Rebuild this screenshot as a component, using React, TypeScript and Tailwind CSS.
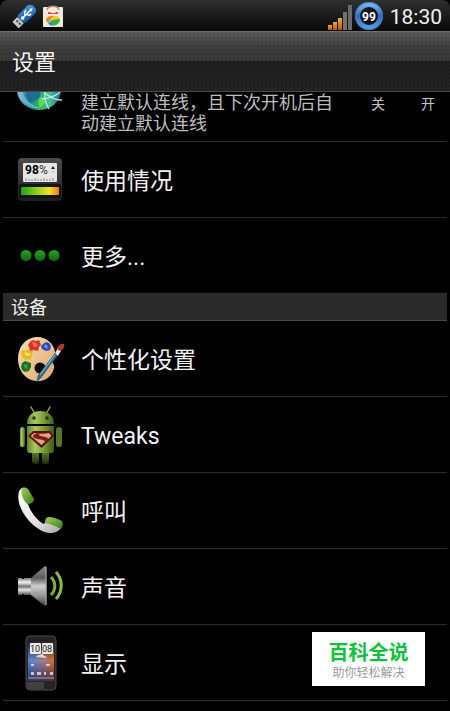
import { ReactNode, useState } from 'react';

function UsbIcon() {
  return (
    <svg width="26" height="24" viewBox="0 0 26 24" aria-hidden="true">
      <defs>
        <linearGradient id="usb" x1="0" y1="0" x2="1" y2="1">
          <stop offset="0" stopColor="#4aa0e6" />
          <stop offset="1" stopColor="#0b4c9c" />
        </linearGradient>
      </defs>
      <g transform="rotate(45 13 12)">
        <rect x="8" y="-3" width="11" height="19" rx="3" fill="url(#usb)" />
        <rect x="9" y="16" width="9" height="7" fill="#c9c9c9" />
        <path d="M11 18h2v2h-2zM14.500 18h2v2h-2z" fill="#444" />
        <path d="M13.500 1v12M13.500 10l-3-3V5M13.500 8l3-2V4" stroke="#fff" strokeWidth="1.400" fill="none" />
        <circle cx="13.500" cy="13" r="1.800" fill="#fff" />
        <path d="M11.500 2l2-3 2 3z" fill="#fff" />
      </g>
    </svg>
  );
}

function AppBoxIcon() {
  return (
    <svg width="22" height="23" viewBox="0 0 22 23" aria-hidden="true">
      <rect x="1" y="2" width="20" height="20" rx="1" fill="#efebe2" />
      <path d="M5 5C6 0 16 0 17 5" fill="none" stroke="#b98d58" strokeWidth="1.500" />
      <path d="M6 7h2l1 1h4l1-1h2v2H6z" fill="#e0483a" />
      <path d="M4 15c0-3 4-5 8-4l-6 7c-1-1-2-2-2-3z" fill="#f08a1c" />
      <path d="M11 11c4-1 7 1 7 4l-8 1z" fill="#f3c81f" />
      <path d="M18 14c0 5-5 8-11 6l3-5z" fill="#43ad32" />
      <path d="M6 18l4-3 1 5c-2 .5-4 0-5-2z" fill="#2793cf" />
    </svg>
  );
}

function SignalIcon() {
  return (
    <svg width="25" height="26" viewBox="0 0 25 26" aria-hidden="true">
      <defs>
        <linearGradient id="signal" x1="0" y1="0" x2="0" y2="1">
          <stop offset="0" stopColor="#f0ac35" />
          <stop offset="1" stopColor="#b8560c" />
        </linearGradient>
      </defs>
      <rect x="0" y="21" width="4" height="5" fill="url(#signal)" />
      <rect x="5" y="18" width="4" height="8" fill="url(#signal)" />
      <rect x="10" y="14" width="4" height="12" fill="url(#signal)" />
      <rect x="15" y="8" width="4" height="18" fill="#77706b" />
      <rect x="20" y="1" width="4" height="25" fill="#6b6b6b" />
    </svg>
  );
}

function BatteryIcon() {
  return (
    <svg width="30" height="30" viewBox="0 0 30 30" role="img" aria-label="99%">
      <defs>
        <linearGradient id="ring" x1="0" y1="0" x2="0" y2="1">
          <stop offset="0" stopColor="#7db2ea" />
          <stop offset="0.5" stopColor="#2d6cbc" />
          <stop offset="1" stopColor="#5a9ae2" />
        </linearGradient>
      </defs>
      <circle cx="15" cy="14" r="11.500" fill="#10151c" stroke="url(#ring)" strokeWidth="5" />
      <circle cx="15" cy="14" r="13.500" fill="none" stroke="#3b7fcc" strokeWidth="1" />
      <text
        x="15"
        y="19"
        textAnchor="middle"
        className="fill-white font-['Roboto',sans-serif] text-[12px] font-bold"
      >
        99
      </text>
    </svg>
  );
}

// only the lower part of the globe is scrolled into view
function GlobeIcon() {
  return (
    <svg width="48" height="20" viewBox="0 0 48 20" aria-hidden="true">
      <defs>
        <linearGradient id="globe">
          <stop offset="0" stopColor="#5fa5c8" />
          <stop offset="0.25" stopColor="#1f7f9c" />
          <stop offset="0.5" stopColor="#2fae62" />
          <stop offset="0.75" stopColor="#4cc08c" />
          <stop offset="1" stopColor="#1c5fa6" />
        </linearGradient>
      </defs>
      <ellipse cx="23" cy="-2" rx="22" ry="20" fill="url(#globe)" />
      <path d="M2 3c4 9 13 14 23 13C16 14 8 8 7 0H2z" fill="#a9d6ea" opacity=".5" />
      <path d="M10 0h14c1 4-1 7-4 8s-4 3-6 2-4-6-4-10z" fill="#1b6f93" />
      <path d="M24 5c4 0 6 3 5 6l-5 5c-2-3-2-8 0-11z" fill="#5bdc4e" />
      <path d="M29 0c-1 6 1 12 4 17M46 8C38 8 32 4 28 0M44 0c-4 4-9 6-18 7" stroke="#b9ece8" strokeWidth="1.300" fill="none" />
    </svg>
  );
}

function UsageIcon() {
  return (
    <svg width="48" height="48" viewBox="0 0 48 48" aria-hidden="true">
      <defs>
        <linearGradient id="meter">
          <stop offset="0" stopColor="#18a51c" />
          <stop offset="0.4" stopColor="#8fce1b" />
          <stop offset="0.75" stopColor="#f2e22a" />
          <stop offset="1" stopColor="#ef7419" />
        </linearGradient>
        <linearGradient id="usageCase" x1="0" y1="0" x2="0" y2="1">
          <stop offset="0" stopColor="#4c4c4c" />
          <stop offset="1" stopColor="#1d1d1d" />
        </linearGradient>
      </defs>
      <rect x="2" y="2" width="44" height="43" rx="4" fill="url(#usageCase)" />
      <rect x="3" y="28" width="42" height="14" fill="#141414" />
      <rect x="7" y="7" width="34" height="19" rx="1" fill="#e6e6e6" />
      <text x="9" y="18" className="fill-black font-['Roboto',sans-serif] text-[12px] font-bold">
        98
      </text>
      <text x="23" y="18" className="fill-[#333] font-['Roboto',sans-serif] text-[12px]">
        %
      </text>
      <path d="M35 13l2-3 2 3z" fill="#222" />
      <path d="M36 15h2l-1 2z" fill="#aaa" />
      <path d="M10 22v3M13 23v2M16 23v2M19 22v3M22 23v2M25 23v2M28 22v3M31 23v2M34 23v2M37 22v3" stroke="#888" strokeWidth="1" />
      <rect x="5" y="31" width="38" height="8" fill="url(#meter)" />
    </svg>
  );
}

function MoreIcon() {
  return (
    <svg width="48" height="48" viewBox="0 0 48 48" aria-hidden="true">
      <defs>
        <linearGradient id="dot" x1="0" y1="0" x2="0" y2="1">
          <stop offset="0" stopColor="#2aa52a" />
          <stop offset="1" stopColor="#0d640d" />
        </linearGradient>
      </defs>
      <circle cx="10" cy="23.500" r="5.500" fill="url(#dot)" />
      <circle cx="24" cy="23.500" r="5.500" fill="url(#dot)" />
      <circle cx="38" cy="23.500" r="5.500" fill="url(#dot)" />
    </svg>
  );
}

function PaletteIcon() {
  return (
    <svg width="52" height="48" viewBox="0 0 52 48" aria-hidden="true">
      <defs>
        <linearGradient id="wood" x1="0" y1="0" x2="1" y2="1">
          <stop offset="0" stopColor="#f7dfae" />
          <stop offset="1" stopColor="#dda970" />
        </linearGradient>
      </defs>
      <path
        d="M22 2C31 1 40 8 41 17c0 4-3 5-3 8 0 4 3 4 2 8-2 9-10 14-18 13C11 45 4 35 4 24 4 12 11 3 22 2z"
        fill="url(#wood)"
      />
      <circle cx="26" cy="33" r="5.500" fill="#0a0705" />
      <path d="M16 7l3-2 3 1 3-1 2 5-2 2-1 4-4-1-4 1-1-4-1-2z" fill="#d93426" />
      <path d="M18 7l4 1 2 3-4 1z" fill="#f07a5e" />
      <path d="M29 9l3-2 3 1 2 3-1 4-4 1-4-2-1-3z" fill="#2b49bd" />
      <path d="M31 9l3 2-1 3-3-2z" fill="#718be4" />
      <path d="M8 15l4 1 2-2 2 2 3 0-1 4-1 4-5 1-3-2-2-4z" fill="#e8b81f" />
      <path d="M10 17l5 1 2 2-5 1z" fill="#f9e25b" />
      <path d="M8 28l3-2 3 1 3 1 0 4-2 4-4 1-3-2-1-3z" fill="#1c7226" />
      <path d="M10 29l4 1-1 4-3-2z" fill="#3f9c43" />
      <path d="M22 48l2-8 17-22 3 2-16 22z" fill="#2d6887" />
      <path d="M26 40l15-20" stroke="#9dc8da" strokeWidth="1" />
      <path d="M41 18l3-5 3 3-3 5z" fill="#e3e3e3" />
      <path d="M43 14c1-4 4-6 7-5 1 3-1 6-4 7z" fill="#a93b32" />
    </svg>
  );
}

function AndroidIcon() {
  return (
    <svg width="48" height="60" viewBox="0 0 48 60" aria-hidden="true">
      <defs>
        <linearGradient id="robot">
          <stop offset="0" stopColor="#5f8529" />
          <stop offset="0.3" stopColor="#a9c564" />
          <stop offset="0.6" stopColor="#7fa23d" />
          <stop offset="1" stopColor="#3c5a17" />
        </linearGradient>
        <linearGradient id="robotLeg" x1="0" y1="0" x2="0" y2="1">
          <stop offset="0" stopColor="#6b9030" />
          <stop offset="1" stopColor="#1e2e0d" />
        </linearGradient>
      </defs>
      <path d="M15 2l4 7M34 2l-4 7" stroke="#8ea958" strokeWidth="1.500" strokeLinecap="round" />
      <rect x="16" y="44" width="7" height="15" rx="3" fill="url(#robotLeg)" />
      <rect x="26" y="44" width="7" height="15" rx="3" fill="url(#robotLeg)" />
      <rect x="4" y="22" width="5" height="20" rx="2.500" fill="url(#robot)" />
      <rect x="40" y="22" width="6" height="20" rx="3" fill="#537725" />
      <path d="M11 19C11 10 17 6 24.500 6S38 10 38 19z" fill="url(#robot)" />
      <path d="M11 21h27v24c0 2-1 3-3 3H14c-2 0-3-1-3-3z" fill="url(#robot)" />
      <circle cx="18" cy="13" r="1.700" fill="#22310e" />
      <circle cx="31" cy="13" r="1.700" fill="#22310e" />
      <path d="M17 26h17l4 5-12.500 12L12 31z" fill="#5a130c" />
      <path d="M18 28h15l2.500 3L25.500 40 14.500 31z" fill="#e2a085" />
      <path d="M17 31c2-4 10-3 15-2-5 0-9-1-9 1s11 1 9 5l-3 2c1-3-12-2-12-6z" fill="#7b1d12" />
    </svg>
  );
}

function PhoneIcon() {
  return (
    <svg width="48" height="48" viewBox="0 0 48 48" aria-hidden="true">
      <defs>
        <linearGradient id="handset" x1="0" y1="0" x2="1" y2="1">
          <stop offset="0" stopColor="#ffffff" />
          <stop offset="0.6" stopColor="#e2e2e2" />
          <stop offset="1" stopColor="#a5a5a5" />
        </linearGradient>
        <linearGradient id="handsetPad" x1="0" y1="0" x2="1" y2="1">
          <stop offset="0" stopColor="#9bd05c" />
          <stop offset="1" stopColor="#3c7d1d" />
        </linearGradient>
      </defs>
      <path
        d="M6 1C2 3 1 10 4 19c3 8 7 13 12 18 6 5 12 9 18 9 5 0 9-2 11-5l-15-6c-1 2-3 2-4 1-6-4-12-12-14-19z"
        fill="url(#handset)"
      />
      <path d="M6 1c2-1 5 0 6 1l6 10c0 3-3 5-7 5C7 13 4 6 6 1z" fill="url(#handsetPad)" />
      <path d="M33 30c4 0 9 2 13 4 1 3 1 5-1 8-5-3-10-5-16-6 0-3 1-6 4-6z" fill="url(#handsetPad)" />
    </svg>
  );
}

function SoundIcon() {
  return (
    <svg width="48" height="48" viewBox="0 0 48 48" aria-hidden="true">
      <defs>
        <linearGradient id="cone" x1="0" y1="0" x2="0" y2="1">
          <stop offset="0" stopColor="#8b8b8b" />
          <stop offset="0.3" stopColor="#5d5d5d" />
          <stop offset="0.5" stopColor="#cfcfcf" />
          <stop offset="0.75" stopColor="#949494" />
          <stop offset="1" stopColor="#3b3b3b" />
        </linearGradient>
        <linearGradient id="magnet" x1="0" y1="0" x2="0" y2="1">
          <stop offset="0" stopColor="#777" />
          <stop offset="0.25" stopColor="#f4f4f4" />
          <stop offset="0.5" stopColor="#777" />
          <stop offset="0.7" stopColor="#e5e5e5" />
          <stop offset="1" stopColor="#555" />
        </linearGradient>
      </defs>
      <path d="M2 15h4v1h2v-1h8v17H8v-1H6v1H2z" fill="url(#magnet)" />
      <path d="M15 15L29 3l1.500 1v38L29 43 15 32z" fill="url(#cone)" />
      <path d="M30 4v38" stroke="#aaa" strokeWidth="1" />
      <path d="M35 14c5 5 5 13 0 18" fill="none" stroke="#7cae3f" strokeWidth="3" />
      <path d="M40 9c7 8 7 19 0 27" fill="none" stroke="#89bd48" strokeWidth="3" />
    </svg>
  );
}

function DisplayIcon() {
  return (
    <svg width="48" height="56" viewBox="0 0 48 56" aria-hidden="true">
      <defs>
        <linearGradient id="wallpaper" x1="0" y1="0" x2="1" y2="0">
          <stop offset="0" stopColor="#5587d4" />
          <stop offset="0.45" stopColor="#8c7fae" />
          <stop offset="1" stopColor="#d8702d" />
        </linearGradient>
        <linearGradient id="wallpaperShade" x1="0" y1="0" x2="0" y2="1">
          <stop offset="0" stopColor="#111" stopOpacity=".9" />
          <stop offset="0.5" stopColor="#111" stopOpacity="0" />
          <stop offset="1" stopColor="#22103a" stopOpacity=".7" />
        </linearGradient>
      </defs>
      <rect x="10" y="1" width="30" height="54" rx="4" fill="#252525" stroke="#4d4d4d" />
      <rect x="12" y="5" width="26" height="41" fill="url(#wallpaper)" />
      <rect x="12" y="5" width="26" height="41" fill="url(#wallpaperShade)" />
      <rect x="14" y="8" width="11" height="11" rx="1" fill="#e9e9e9" />
      <rect x="26" y="8" width="11" height="11" rx="1" fill="#e9e9e9" />
      <text x="14" y="17" className="fill-[#222] font-['Roboto',sans-serif] text-[9px]">
        10
      </text>
      <text x="26" y="17" className="fill-[#222] font-['Roboto',sans-serif] text-[9px]">
        08
      </text>
      <path d="M20 22c1-2 3-2 4-2 1-2 4-1 4 1 2 0 3 1 2 2z" fill="#e9d7bc" />
      <path d="M15 29h3v2h-3zM30 29h4v2h-4zM15 37h3v3h-3zM21 37h4v3h-4zM28 37h2v3h-2zM34 37h3v3h-3z" fill="#e6e2f0" opacity=".8" />
      <path d="M12 43h26" stroke="#a4a0a8" strokeWidth="1" />
      <rect x="11" y="47" width="17" height="7" fill="#404040" />
    </svg>
  );
}

const networkItems = [
  { label: '使用情况', icon: <UsageIcon /> },
  { label: '更多...', icon: <MoreIcon /> },
];

const deviceItems = [
  { label: '个性化设置', icon: <PaletteIcon /> },
  { label: 'Tweaks', icon: <AndroidIcon /> },
  { label: '呼叫', icon: <PhoneIcon /> },
  { label: '声音', icon: <SoundIcon /> },
  { label: '显示', icon: <DisplayIcon /> },
];

function SettingRow({ label, icon }: { label: string; icon: ReactNode }) {
  return (
    <li className="border-b border-[#2c2c2c]">
      <button type="button" className="flex h-[75px] w-full items-center text-left">
        <span className="flex w-[74px] shrink-0 justify-center">{icon}</span>
        <span className="ml-1 pt-1 text-[23px] leading-7 text-[#f2f2f2]">{label}</span>
      </button>
    </li>
  );
}

export default function App() {
  const [connected, setConnected] = useState(false);

  return (
    <div className="flex min-h-screen flex-col bg-black font-['Roboto','Noto_Sans_CJK_SC',sans-serif] text-white">
      {/* Status bar */}
      <div className="bg-black">
        <div className="flex h-[31px] items-center justify-between rounded-t-lg bg-linear-to-b from-[#303030] to-[#080808] pt-0.5 pr-2 pl-2.5">
          <div className="flex items-center gap-1.5">
            <UsbIcon />
            <AppBoxIcon />
          </div>
          <div className="flex items-center">
            <SignalIcon />
            <span className="ml-px">
              <BatteryIcon />
            </span>
            <span className="ml-1.5 text-[21px] leading-6 text-[#f0f0f0]">18:30</span>
          </div>
        </div>
      </div>

      {/* Title bar */}
      <header className="flex h-[61px] items-center border-t border-b border-t-[#707070] border-b-[#4a4a4a] bg-[radial-gradient(circle,#00000018_1px,transparent_1px),linear-gradient(to_bottom,#5a5a5a_0%,#3e3e3e_25%,#363636_50%,#1e1e1e_50%,#232323_100%)] bg-[size:4px_4px,100%_100%] px-3">
        <h1 className="pt-0.5 text-[22px] leading-7 text-[#f4f4f4]">设置</h1>
      </header>

      <main className="flex-1 px-[3px]">
        <div className="flex h-[50px] border-b border-[#2c2c2c]">
          <span className="flex w-[74px] shrink-0 justify-center">
            <GlobeIcon />
          </span>
          <p className="ml-1 w-[260px] shrink-0 text-[18px] leading-[21px] text-[#bdbdbd]">
            建立默认连线，且下次开机后自动建立默认连线
          </p>
          <button
            type="button"
            role="switch"
            aria-checked={connected}
            aria-label="建立默认连线"
            onClick={() => setConnected(!connected)}
            className="ml-auto flex h-6 items-center gap-9 pr-3 text-[14px] text-[#c4c4c4]"
          >
            <span>关</span>
            <span>开</span>
          </button>
        </div>

        <ul>
          {networkItems.map((item) => (
            <SettingRow key={item.label} label={item.label} icon={item.icon} />
          ))}
        </ul>

        <h2 className="h-[27px] border-b border-[#484848] bg-[#2a2a2a] px-2 text-[18px] leading-7 text-[#f0f0f0]">
          设备
        </h2>

        <ul>
          {deviceItems.map((item) => (
            <SettingRow key={item.label} label={item.label} icon={item.icon} />
          ))}
        </ul>
      </main>

      {/* Site badge over the list */}
      <aside className="fixed right-[25px] bottom-[25px] flex h-[54px] w-[113px] flex-col items-center justify-center bg-white pt-1">
        <p className="text-[20px] leading-6 font-bold text-[#0fc23c]">百科全说</p>
        <p className="text-xs leading-4 text-[#999999]">助你轻松解决</p>
      </aside>
    </div>
  );
}
